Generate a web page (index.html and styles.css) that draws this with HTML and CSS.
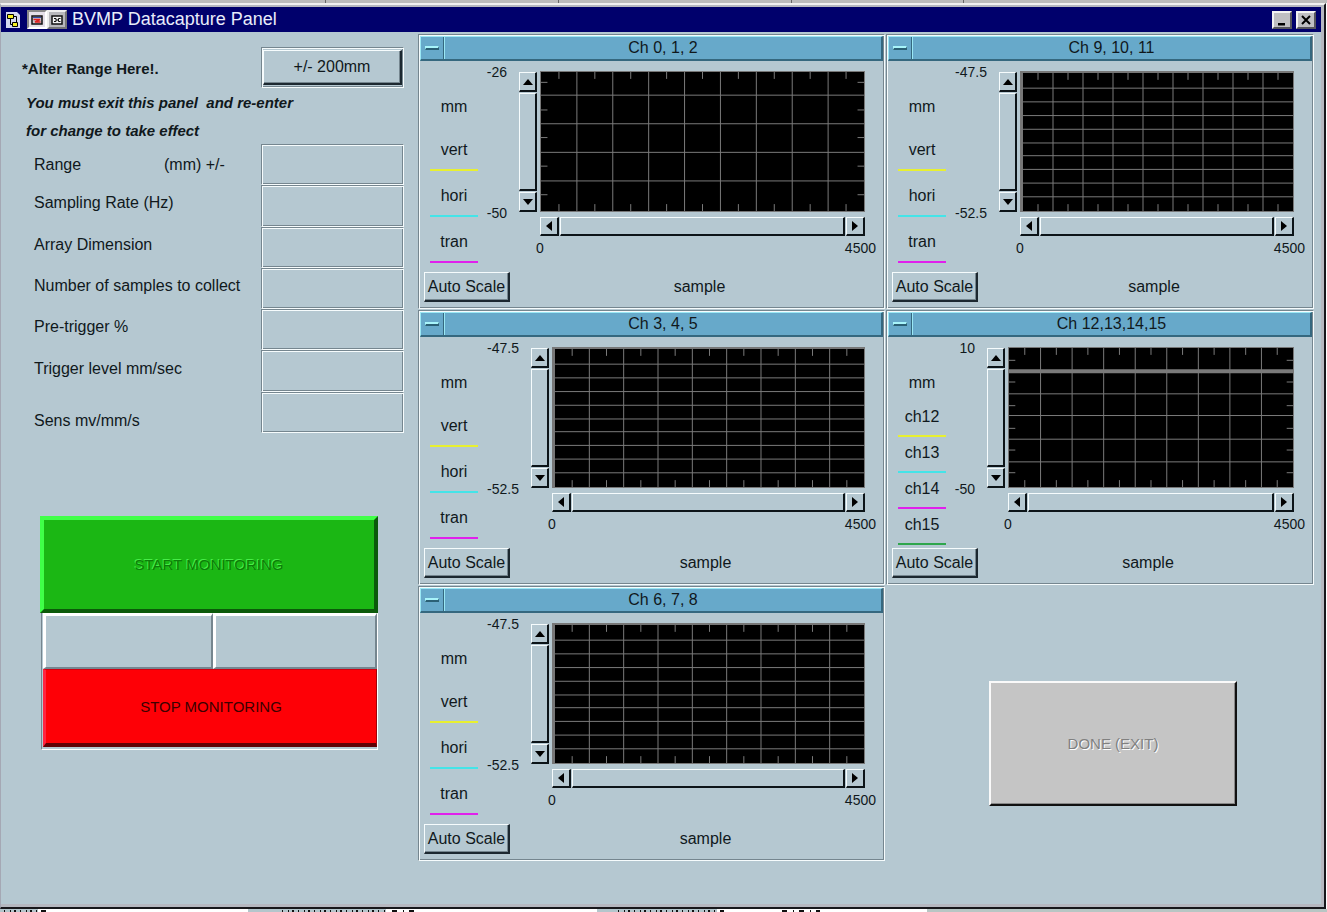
FILE: index.html
```html
<!DOCTYPE html>
<html lang="en">
<head>
<meta charset="utf-8">
<title>BVMP Datacapture Panel</title>
<link rel="stylesheet" href="styles.css">
</head>
<body>
<svg class="defs" aria-hidden="true">
  <defs>
    <symbol id="grid-x" viewBox="0 0 900 141" preserveAspectRatio="none">
      <path vector-effect="non-scaling-stroke" d="M100 0V141M200 0V141M300 0V141M400 0V141M500 0V141M600 0V141M700 0V141M800 0V141M50 0V7M150 0V7M250 0V7M350 0V7M450 0V7M550 0V7M650 0V7M750 0V7M850 0V7M50 134V141M150 134V141M250 134V141M350 134V141M450 134V141M550 134V141M650 134V141M750 134V141M850 134V141"/>
    </symbol>
    <symbol id="grid-y-ten" viewBox="0 0 900 141" preserveAspectRatio="none">
      <path vector-effect="non-scaling-stroke" d="M0 15.5H900M0 29.5H900M0 43.5H900M0 57.5H900M0 71.5H900M0 84.5H900M0 98.5H900M0 112.5H900M0 126.5H900"/>
    </symbol>
    <symbol id="grid-y-five" viewBox="0 0 900 141" preserveAspectRatio="none">
      <path vector-effect="non-scaling-stroke" d="M0 23.5H900M0 52.5H900M0 81.5H900M0 110.5H900M0 10.5H18M0 38.5H18M0 66.5H18M0 95.5H18M0 124.5H18M882 10.5H900M882 38.5H900M882 66.5H900M882 95.5H900M882 124.5H900"/>
    </symbol>
    <symbol id="grid-y-six" viewBox="0 0 900 141" preserveAspectRatio="none">
      <path vector-effect="non-scaling-stroke" d="M0 46.5H900M0 68.5H900M0 92.5H900M0 115.5H900M0 12.5H20M0 34.5H20M0 58.5H20M0 81.5H20M0 103.5H20M0 126.5H20M880 12.5H900M880 34.5H900M880 58.5H900M880 81.5H900M880 103.5H900M880 126.5H900"/>
      <path class="trace" vector-effect="non-scaling-stroke" d="M0 23.5H900"/>
    </symbol>
    <symbol id="up" viewBox="0 0 10 6"><path d="M5 0L10 6H0Z"/></symbol>
    <symbol id="down" viewBox="0 0 10 6"><path d="M0 0H10L5 6Z"/></symbol>
    <symbol id="left" viewBox="0 0 6 10"><path d="M0 5L6 0V10Z"/></symbol>
    <symbol id="right" viewBox="0 0 6 10"><path d="M0 0L6 5L0 10Z"/></symbol>
  </defs>
</svg>

<div class="behind-top"><i></i><i></i><i></i><i></i></div>

<div class="window">
  <header class="titlebar">
    <svg class="doc-icon" viewBox="0 0 14 18" aria-hidden="true">
      <path fill="#d4d8f0" d="M0 1H11L14 4V17H0Z"/>
      <path fill="#f4ee20" stroke="#000" d="M1.500 3.500h6v4h-6zM6.500 11.500h5v4h-5z"/>
      <path fill="none" stroke="#000" d="M7.500 5.500h3v6M4.500 7.500v6h2"/>
    </svg>
    <div class="modes">
      <button class="mode pressed" aria-label="Panel view"><svg viewBox="0 0 12 10"><path fill="#c9c4cc" stroke="#111" stroke-width="1.500" d="M1 1H11V9H1Z"/><path fill="#334caa" d="M2 2h8v1H2z"/><path fill="none" stroke="#e02020" stroke-width="1.500" d="M2.500 4.500H9L4 7H9.500"/></svg></button>
      <button class="mode" aria-label="Detail view"><svg viewBox="0 0 12 10"><path fill="#f2f2f2" stroke="#111" stroke-width="1.500" d="M1 1H11V9H1Z"/><path fill="none" stroke="#111" d="M3 3.500H5V6.500H3M5 5H7M9.500 3.500H7.500V6.500H9.500"/></svg></button>
    </div>
    <h1>BVMP Datacapture Panel</h1>
    <div class="window-buttons">
      <button aria-label="Minimize"><svg viewBox="0 0 16 14"><path d="M4 10H11V12.500H4Z"/></svg></button>
      <button aria-label="Close"><svg viewBox="0 0 16 14"><path fill="none" stroke="#000" stroke-width="2" d="M4 3L12 11M12 3L4 11"/></svg></button>
    </div>
  </header>

  <main class="content">
    <section class="settings">
      <div class="alter">
        <strong>*Alter Range Here!.</strong>
        <div class="groove"><button class="raised range-button">+/- 200mm</button></div>
      </div>
      <p class="note">You must exit this panel&nbsp; and re-enter<br>for change to take effect</p>

      <form class="fields">
        <label for="range" class="split"><span>Range</span><span>(mm) +/-</span></label><input id="range" class="groove" readonly>
        <label for="rate">Sampling Rate (Hz)</label><input id="rate" class="groove" readonly>
        <label for="array">Array Dimension</label><input id="array" class="groove" readonly>
        <label for="count">Number of samples to collect</label><input id="count" class="groove" readonly>
        <label for="pre">Pre-trigger %</label><input id="pre" class="groove" readonly>
        <label for="level">Trigger level mm/sec</label><input id="level" class="groove" readonly>
        <label for="sens" class="low">Sens mv/mm/s</label><input id="sens" class="groove" readonly>
      </form>

      <div class="actions">
        <button class="start" disabled>START MONITORING</button>
        <div class="stop-frame">
          <div class="readouts">
            <input aria-label="Status" readonly>
            <input aria-label="Count" readonly>
          </div>
          <button class="stop">STOP MONITORING</button>
        </div>
      </div>
    </section>

    <div class="charts">
      <section class="panel groove short-scale">
        <header class="panel-title"><button aria-label="Panel menu"><i></i></button><h2>Ch 0, 1, 2</h2></header>
        <div class="panel-body">
          <div class="legend"><p>mm</p><ul><li class="yellow">vert</li><li class="cyan">hori</li><li class="magenta">tran</li></ul></div>
          <div class="scale"><span>-26</span><span>-50</span></div>
          <div class="scroll vertical"><button aria-label="Scroll up"><svg viewBox="0 0 10 6"><use href="#up"/></svg></button><i></i><button aria-label="Scroll down"><svg viewBox="0 0 10 6"><use href="#down"/></svg></button></div>
          <svg class="plot" role="img" aria-label="Ch 0, 1, 2 plot"><use href="#grid-x"/><use href="#grid-y-five"/></svg>
          <div class="scroll horizontal"><button aria-label="Scroll left"><svg viewBox="0 0 6 10"><use href="#left"/></svg></button><i></i><button aria-label="Scroll right"><svg viewBox="0 0 6 10"><use href="#right"/></svg></button></div>
          <div class="axis"><span>0</span><span>4500</span></div>
          <button class="raised auto">Auto Scale</button>
          <p class="unit">sample</p>
        </div>
      </section>

      <section class="panel groove">
        <header class="panel-title"><button aria-label="Panel menu"><i></i></button><h2>Ch 9, 10, 11</h2></header>
        <div class="panel-body">
          <div class="legend"><p>mm</p><ul><li class="yellow">vert</li><li class="cyan">hori</li><li class="magenta">tran</li></ul></div>
          <div class="scale"><span>-47.5</span><span>-52.5</span></div>
          <div class="scroll vertical"><button aria-label="Scroll up"><svg viewBox="0 0 10 6"><use href="#up"/></svg></button><i></i><button aria-label="Scroll down"><svg viewBox="0 0 10 6"><use href="#down"/></svg></button></div>
          <svg class="plot heavy" role="img" aria-label="Ch 9, 10, 11 plot"><use href="#grid-x"/><use href="#grid-y-ten"/></svg>
          <div class="scroll horizontal"><button aria-label="Scroll left"><svg viewBox="0 0 6 10"><use href="#left"/></svg></button><i></i><button aria-label="Scroll right"><svg viewBox="0 0 6 10"><use href="#right"/></svg></button></div>
          <div class="axis"><span>0</span><span>4500</span></div>
          <button class="raised auto">Auto Scale</button>
          <p class="unit">sample</p>
        </div>
      </section>

      <section class="panel groove">
        <header class="panel-title"><button aria-label="Panel menu"><i></i></button><h2>Ch 3, 4, 5</h2></header>
        <div class="panel-body">
          <div class="legend"><p>mm</p><ul><li class="yellow">vert</li><li class="cyan">hori</li><li class="magenta">tran</li></ul></div>
          <div class="scale"><span>-47.5</span><span>-52.5</span></div>
          <div class="scroll vertical"><button aria-label="Scroll up"><svg viewBox="0 0 10 6"><use href="#up"/></svg></button><i></i><button aria-label="Scroll down"><svg viewBox="0 0 10 6"><use href="#down"/></svg></button></div>
          <svg class="plot heavy" role="img" aria-label="Ch 3, 4, 5 plot"><use href="#grid-x"/><use href="#grid-y-ten"/></svg>
          <div class="scroll horizontal"><button aria-label="Scroll left"><svg viewBox="0 0 6 10"><use href="#left"/></svg></button><i></i><button aria-label="Scroll right"><svg viewBox="0 0 6 10"><use href="#right"/></svg></button></div>
          <div class="axis"><span>0</span><span>4500</span></div>
          <button class="raised auto">Auto Scale</button>
          <p class="unit">sample</p>
        </div>
      </section>

      <section class="panel groove short-scale">
        <header class="panel-title"><button aria-label="Panel menu"><i></i></button><h2>Ch 12,13,14,15</h2></header>
        <div class="panel-body">
          <div class="legend dense"><p>mm</p><ul><li class="yellow">ch12</li><li class="cyan">ch13</li><li class="magenta">ch14</li><li class="green">ch15</li></ul></div>
          <div class="scale"><span>10</span><span>-50</span></div>
          <div class="scroll vertical"><button aria-label="Scroll up"><svg viewBox="0 0 10 6"><use href="#up"/></svg></button><i></i><button aria-label="Scroll down"><svg viewBox="0 0 10 6"><use href="#down"/></svg></button></div>
          <svg class="plot" role="img" aria-label="Ch 12 to 15 plot"><use href="#grid-x"/><use href="#grid-y-six"/></svg>
          <div class="scroll horizontal"><button aria-label="Scroll left"><svg viewBox="0 0 6 10"><use href="#left"/></svg></button><i></i><button aria-label="Scroll right"><svg viewBox="0 0 6 10"><use href="#right"/></svg></button></div>
          <div class="axis"><span>0</span><span>4500</span></div>
          <button class="raised auto">Auto Scale</button>
          <p class="unit">sample</p>
        </div>
      </section>

      <section class="panel groove">
        <header class="panel-title"><button aria-label="Panel menu"><i></i></button><h2>Ch 6, 7, 8</h2></header>
        <div class="panel-body">
          <div class="legend"><p>mm</p><ul><li class="yellow">vert</li><li class="cyan">hori</li><li class="magenta">tran</li></ul></div>
          <div class="scale"><span>-47.5</span><span>-52.5</span></div>
          <div class="scroll vertical"><button aria-label="Scroll up"><svg viewBox="0 0 10 6"><use href="#up"/></svg></button><i></i><button aria-label="Scroll down"><svg viewBox="0 0 10 6"><use href="#down"/></svg></button></div>
          <svg class="plot heavy" role="img" aria-label="Ch 6, 7, 8 plot"><use href="#grid-x"/><use href="#grid-y-ten"/></svg>
          <div class="scroll horizontal"><button aria-label="Scroll left"><svg viewBox="0 0 6 10"><use href="#left"/></svg></button><i></i><button aria-label="Scroll right"><svg viewBox="0 0 6 10"><use href="#right"/></svg></button></div>
          <div class="axis"><span>0</span><span>4500</span></div>
          <button class="raised auto">Auto Scale</button>
          <p class="unit">sample</p>
        </div>
      </section>

      <div class="exit"><button class="done" disabled>DONE (EXIT)</button></div>
    </div>
  </main>
</div>

<div class="behind-bottom">
  <svg height="3" width="940" viewBox="0 0 940 3" aria-hidden="true">
    <path fill="#b4c6cc" d="M0 0h38v3H0zM248 0h138v3H248zM597 0h120v3H597z"/>
    <path stroke="#111" stroke-width="2" stroke-dasharray="1 5 1 3 2 4" d="M4 2H38M282 2H386M618 2H718"/>
    <path stroke="#111" stroke-width="2" stroke-dasharray="5 6 1 5" d="M41 2H48M392 2H418M720 2H724M782 2H820"/>
  </svg>
</div>
</body>
</html>
```
FILE: styles.css
```css
* { box-sizing: border-box; }

:root {
  --face: #b5c8d1;
  --shade: #75868f;
  --light: #f6fcfd;
  --ink: #10181c;
}

body {
  margin: 0;
  min-height: 100vh;
  display: flex;
  flex-direction: column;
  background: #fff;
  color: var(--ink);
  font: 16px/18px "Liberation Sans", Arial, sans-serif;
}

button, input { font: inherit; color: inherit; margin: 0; padding: 0; border: 0; border-radius: 0; min-width: 0; background: none; }
h1, h2, p, ul { margin: 0; padding: 0; font-weight: normal; list-style: none; }
svg { display: block; }
.defs { position: absolute; width: 0; height: 0; }

/* Slivers of the window underneath */
.behind-top {
  height: 3px;
  background: #bcbcbc;
  display: grid;
  grid-template-columns: 326px 233px 233px 172px;
}
.behind-top i { border-right: 1px solid #666; }
.behind-bottom { height: 3px; background: #fff; overflow: hidden; border-right: 400px solid #b8c6c4; }

/* Window frame */
.window {
  flex: 1;
  display: flex;
  flex-direction: column;
  margin-right: 1px;
  padding: 2px 3px 3px 0;
  background: #b6b8c0;
  border: solid;
  border-width: 2px 2px 2px 1px;
  border-color: #f0f0f0 #17171b #17171b #a5a8b4;
}

.titlebar {
  display: flex;
  align-items: center;
  height: 25px;
  padding: 0 5px;
  background: #00006c;
  color: #e8ecfa;
}
.doc-icon { width: 14px; height: 18px; }
.modes { display: flex; margin: 0 5px 0 7px; }
.mode {
  display: grid;
  place-items: center;
  width: 20px;
  height: 19px;
  background: #b8b8bc;
  border: 2px solid;
  border-color: #eee #777 #777 #eee;
}
.mode.pressed { background: #e4dfe8; border-color: #888 #fff #fff #888; }
.mode svg { width: 12px; height: 10px; }
.titlebar h1 { flex: 1; font-size: 18px; line-height: 20px; padding-bottom: 1px; }
.window-buttons { display: flex; gap: 4px; }
.window-buttons button {
  width: 20px;
  height: 18px;
  background: #bfbfc2;
  border: 2px solid;
  border-color: #f2f2f2 #55555c #55555c #f2f2f2;
}

.content {
  flex: 1;
  display: grid;
  grid-template-columns: 417px 1fr;
  padding: 2px 7px 0 0;
  background: var(--face);
}

/* Shared bevels */
.groove {
  border: 1px solid;
  border-color: var(--shade) var(--light) var(--light) var(--shade);
  box-shadow: inset 1px 1px var(--light), inset -1px -1px var(--shade);
}
.raised {
  border: solid;
  border-width: 1px 2px 2px 1px;
  border-color: var(--light) #1c2830 #1c2830 var(--light);
  box-shadow: inset -1px -1px var(--shade);
}

/* Settings column */
.settings { padding: 13px 14px 0 21px; }
.alter { display: grid; grid-template-columns: 1fr 143px; align-items: center; }
.alter strong { font-size: 15px; padding-top: 2px; }
.alter .groove { height: 41px; padding: 2px 1px; }
.range-button { display: block; width: 100%; height: 100%; }
.note { padding: 1px 0 0 4px; font-size: 15px; line-height: 28px; margin-bottom: -1px; font-weight: bold; font-style: italic; }

.fields {
  display: grid;
  grid-template-columns: 1fr 143px;
  grid-auto-rows: 1fr;
  min-height: 289px;
  align-items: center;
}
.fields label { padding: 0 0 5px 12px; }
.fields .split { display: grid; grid-template-columns: 130px auto; padding-bottom: 0; }
.fields .low { padding: 17px 0 0 12px; }
.fields input { width: 100%; height: 100%; }

.actions { width: 338px; margin: 83px 0 0 18px; }
.start {
  display: block;
  width: 100%;
  height: 97px;
  background: #1bb714;
  border: 4px solid;
  border-color: #40ff48 #0b5a0a #0b5a0a #40ff48;
  color: #0d7d0a;
  text-shadow: -1px -1px #48ee48;
  font-size: 15px;
}
.stop-frame {
  margin-left: 1px;
  padding: 0 0 2px 1px;
  border: solid;
  border-width: 0 1px 1px 1px;
  border-color: #fff #fff #fff var(--shade);
}
.readouts { display: grid; grid-template-columns: 170px 1fr; height: 56px; }
.readouts input {
  width: 100%;
  border: solid;
  border-width: 3px 2px 2px 3px;
  border-color: #fff var(--shade) var(--shade) #fff;
}
.stop {
  display: block;
  width: 100%;
  height: 78px;
  background: #fe0006;
  border: solid;
  border-width: 1px 1px 4px 3px;
  border-color: #d00010 #a00008 #600004 #ff2440;
  color: #3c0000;
  font-size: 15px;
}

/* Chart panels */
.charts {
  display: grid;
  grid-template-columns: 467fr 428fr;
  grid-auto-rows: 275px;
  gap: 1px;
}
.panel { padding: 1px; --scale: 32px; }
.short-scale { --scale: 20px; }
.panel-title {
  display: flex;
  height: 25px;
  background: #67a9ca;
  border: solid;
  border-width: 1px 2px 2px 1px;
  border-color: #9be8f5 #35687f #35687f #9be8f5;
}
.panel-title button { width: 23px; border-right: 1px solid #35687f; display: grid; place-items: center; }
.panel-title button i {
  width: 14px;
  height: 4px;
  border: solid;
  border-width: 2px 1px 2px 1px;
  border-color: #a8f4fa #2b6075 #2b6075 #a8f4fa;
}
.panel-title h2 { flex: 1; border-left: 1px solid #9be8f5; font-size: 16px; line-height: 22px; text-align: center; }

.panel-body {
  display: grid;
  grid-template-columns: 57px var(--scale) 12px 18px 3px 1fr;
  grid-template-rows: 141px 19px 26px 30px;
  row-gap: 5px;
  padding: 10px 18px 5px 10px;
}
.legend { grid-area: 1 / 1 / 4 / 2; width: 48px; padding-top: 27px; text-align: center; }
.legend ul { display: grid; gap: 16px; margin-top: 25px; }
.legend li { padding-bottom: 10px; border-bottom: 2px solid; }
.legend.dense ul { gap: 7px; margin-top: 16px; }
.legend.dense li { padding-bottom: 9px; }
.legend .yellow { border-color: #e8f030; }
.legend .cyan { border-color: #44e4e8; }
.legend .magenta { border-color: #e020ec; }
.legend .green { border-color: #2fa64c; }

.scale {
  grid-area: 1 / 2;
  display: flex;
  flex-direction: column;
  justify-content: space-between;
  align-items: flex-end;
  margin: -8px 0 -10px;
  font-size: 14px;
}
.scroll { display: flex; gap: 1px; }
.vertical { grid-area: 1 / 4; flex-direction: column; margin-top: 1px; }
.horizontal { grid-area: 2 / 6; }
.scroll button, .scroll i {
  display: grid;
  place-items: center;
  border: solid;
  border-width: 1px 2px 2px 1px;
  border-color: var(--light) #0c1418 #0c1418 var(--light);
}
.scroll i { flex: 1; }
.vertical button { height: 20px; }
.horizontal button { width: 19px; }
.vertical svg { width: 10px; height: 6px; }
.horizontal svg { width: 6px; height: 10px; }

.plot {
  grid-area: 1 / 6;
  width: 100%;
  height: 141px;
  background: #000;
  border: 1px solid #777;
  fill: none;
  stroke: #7a7a7a;
}
.plot.heavy { border-width: 2px 1px 1px 3px; }
.trace { stroke-width: 4px; }
.axis {
  grid-area: 3 / 6;
  display: flex;
  justify-content: space-between;
  margin: 0 -11px 0 -4px;
  font-size: 14px;
  line-height: 14px;
}
.auto { grid-area: 4 / 1 / 5 / 5; justify-self: start; width: 86px; margin-left: -6px; }
.unit { grid-area: 4 / 6; padding-right: 6px; align-self: center; text-align: center; }

.exit { display: flex; justify-content: center; align-items: flex-start; padding: 95px 0 0 26px; }
.done {
  width: 248px;
  height: 125px;
  background: #c5c5c5;
  border: 2px solid;
  border-color: #fafafa #111 #111 #fafafa;
  box-shadow: inset -1px -1px #888;
  color: #808080;
  text-shadow: 1px 1px #fff;
  font-size: 15px;
}
```
